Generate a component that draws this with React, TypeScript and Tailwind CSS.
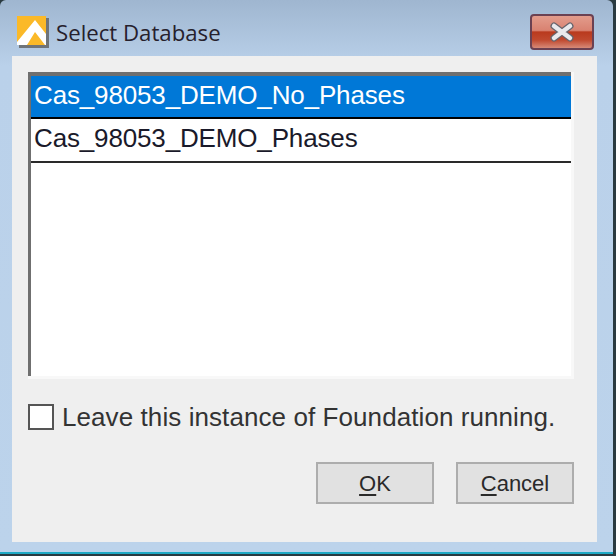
const Logo = () => (
  <svg width="32" height="32" viewBox="0 0 32 32" className="shrink-0">
    <rect x="2" y="2" width="30" height="30" fill="#6f7478" />
    <rect x="0" y="0" width="29" height="29" fill="#fbb928" />
    <path d="M0 26 L18 4 L29 18 L29 29 L28 29 L18 16 L10 29 L0 29 Z" fill="#ffffff" />
  </svg>
)

const CloseButton = () => (
  <button className="flex h-9 w-16 items-center justify-center rounded border-2 border-[#6b4152] bg-[linear-gradient(#e39c8c_0%,#d98271_45%,#b93a1e_50%,#c0492f_75%,#d78a78_100%)]">
    <svg width="26" height="20" viewBox="0 0 26 20">
      <path d="M5 4 L21 16 M21 4 L5 16" stroke="#66646c" strokeWidth="7" strokeLinecap="round" />
      <path d="M5 4 L21 16 M21 4 L5 16" stroke="#e9e9ec" strokeWidth="4.5" strokeLinecap="round" />
    </svg>
  </button>
)

const DialogButton = ({ hotkey, rest }: { hotkey: string; rest: string }) => (
  <button className="h-[42px] w-[118px] border-2 border-[#adadad] bg-[#e1e1e1] pt-[2px] font-['Liberation_Sans',sans-serif] text-[22px] leading-none text-[#2a2a2a]">
    <span className="underline decoration-2 underline-offset-[3px]">{hotkey}</span>
    {rest}
  </button>
)

export default function App() {
  return (
    <div className="h-[556px] w-[616px] overflow-hidden bg-[#2a3a40]">
      <div className="h-[554px] w-[613px] rounded-t-md border-b-2 border-[#1fa9c4] bg-[linear-gradient(#9fb6d0_0%,#bad1ea_12%,#bcd3eb_100%)] px-3">
        <div className="flex h-14 items-center justify-between pr-[7px]">
          <div className="mt-2 flex items-center gap-[7px] pl-[5px]">
            <Logo />
            <span className="pt-[2px] font-['Open_Sans',sans-serif] text-[22.2px] leading-none text-[#26202c]">Select Database</span>
          </div>
          <div className="mt-[8px]">
            <CloseButton />
          </div>
        </div>

        <div className="flex h-[486px] w-[585px] flex-col bg-[#efefef] pl-4 pr-[23px] pt-4">
          <div className="h-[307px] border-b-[3px] border-r-[3px] border-[#f8f8f8] bg-white">
            <div className="h-full border-l-[3px] border-t-[4px] border-[#6f6f6f] font-['Liberation_Sans',sans-serif] text-[26px] leading-none tracking-[-0.15px]">
              <div className="flex h-[43px] items-center border-b-2 border-black bg-[#0078d7] pb-[4px] pl-[3px] text-white">
                Cas_98053_DEMO_No_Phases
              </div>
              <div className="flex h-[44px] items-center border-b-2 border-[#2a2a2a] pb-[4px] pl-[3px] text-[#1a1a2a]">
                Cas_98053_DEMO_Phases
              </div>
            </div>
          </div>

          <label className="mt-[24px] flex h-[28px] items-center gap-[8px] font-['Liberation_Sans',sans-serif] text-[26px] leading-none tracking-[0.08px] text-[#333333]">
            <span className="h-[26px] w-[26px] shrink-0 border-2 border-[#555555] bg-white" />
            Leave this instance of Foundation running.
          </label>

          <div className="mt-[31px] flex justify-end gap-[22px]">
            <DialogButton hotkey="O" rest="K" />
            <DialogButton hotkey="C" rest="ancel" />
          </div>
        </div>
      </div>
    </div>
  )
}
